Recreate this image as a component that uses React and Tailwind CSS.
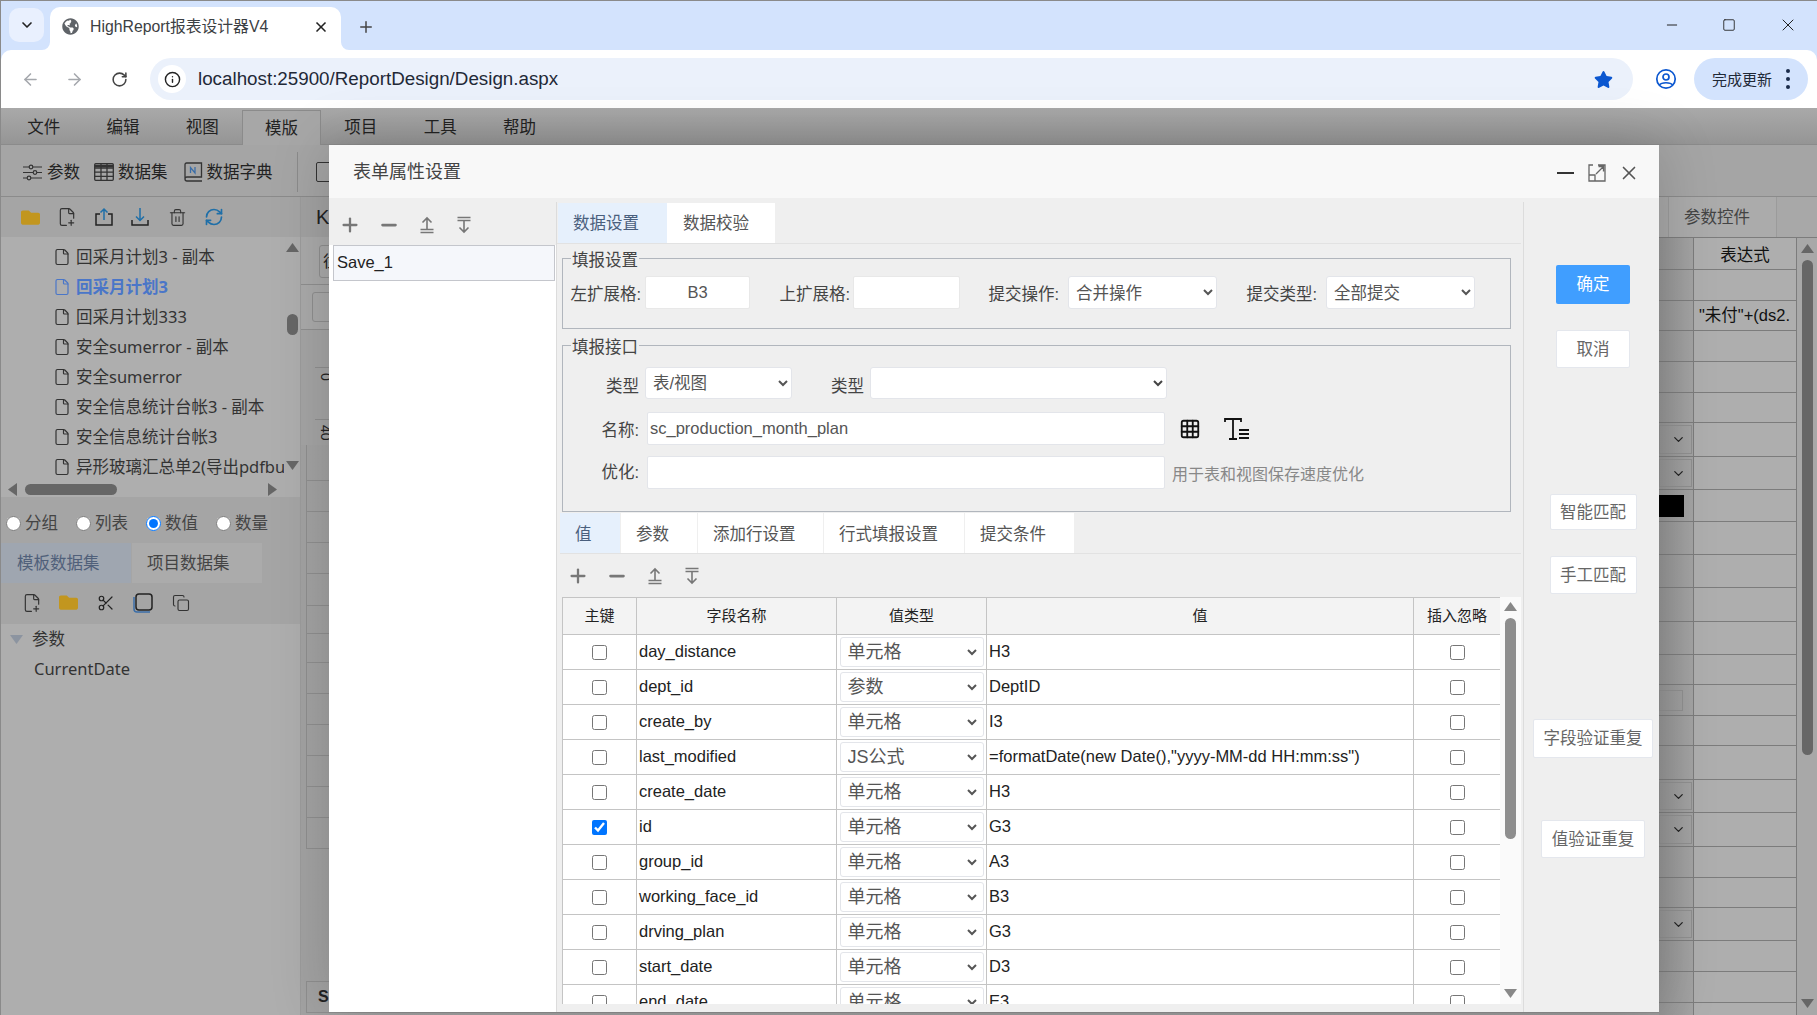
import { ArrowLeft, ArrowRight, RotateCw, Plus, X, ChevronDown, Info, Minus, Square, File, FilePlus2, Trash2, Scissors, Copy, RefreshCw, Grid3x3 } from 'lucide-react';
import { FaGlobeAmericas, FaStar, FaFolder } from 'react-icons/fa';

const cjk = { fontFamily: '"Liberation Sans", "Noto Sans CJK SC", sans-serif' };

const treeItems = ['回采月计划3 - 副本', '回采月计划3', '回采月计划333', '安全sumerror - 副本', '安全sumerror', '安全信息统计台帐3 - 副本', '安全信息统计台帐3', '异形玻璃汇总单2(导出pdfbu'];

const fields = [
    ['day_distance', '单元格', 'H3'],
    ['dept_id', '参数', 'DeptID'],
    ['create_by', '单元格', 'I3'],
    ['last_modified', 'JS公式', '=formatDate(new Date(),"yyyy-MM-dd HH:mm:ss")'],
    ['create_date', '单元格', 'H3'],
    ['id', '单元格', 'G3', true],
    ['group_id', '单元格', 'A3'],
    ['working_face_id', '单元格', 'B3'],
    ['drving_plan', '单元格', 'G3'],
    ['start_date', '单元格', 'D3'],
    ['end_date', '单元格', 'E3'],
];

const sheetRows = [32, 31, 30, 31, 31, 30, 34, 33, 32, 33, 33, 34, 33, 30, 31, 30, 34, 33, 34, 31, 30, 33, 31, 31, 33];

const PlusIcon = () => <Plus size={22} strokeWidth={2.5} className="text-[#777]" />;
const MinusIcon = () => <Minus size={22} strokeWidth={3} className="text-[#777]" />;

const MoveTop = () => (
    <svg width="20" height="20" viewBox="0 0 20 20" fill="none" stroke="#777" strokeWidth="1.6">
        <path d="M10 3v11M5.500 7.500 10 3l4.500 4.500M3.500 14.500h13M3.500 17.500h13" />
    </svg>
);

const MoveBottom = () => (
    <svg width="20" height="20" viewBox="0 0 20 20" fill="none" stroke="#777" strokeWidth="1.6">
        <path d="M3.500 2.500h13M3.500 5.500h13M10 6v11M5.500 12.500 10 17l4.500-4.500" />
    </svg>
);

const ListTools = ({ gap }) => (
    <div className={`flex items-center ${gap}`}>
        <PlusIcon />
        <MinusIcon />
        <MoveTop />
        <MoveBottom />
    </div>
);

const Triangle = ({ dir, className = '' }) => {
    const d = { up: 'M0 9 6.500 0 13 9z', down: 'M0 0h13L6.500 9z', left: 'M9 0v13L0 6.500z', right: 'M0 0v13l9-6.500z' }[dir];
    const vertical = dir === 'up' || dir === 'down';
    return (
        <svg width={vertical ? 13 : 9} height={vertical ? 9 : 13} viewBox={vertical ? '0 0 13 9' : '0 0 9 13'} className={`shrink-0 ${className}`}>
            <path d={d} fill="currentColor" />
        </svg>
    );
};

const Select = ({ value, className }) => (
    <select defaultValue={value} className={`bg-white border border-[#e3e5ea] rounded-[3px] text-[#555] ${className}`}>
        <option value={value}>{value}</option>
    </select>
);

const BrowserChrome = () => (
    <div className="shrink-0 border-t border-l border-[#8a8a8a] bg-[#d3e3fd]">
        <div className="h-[49px] flex items-end pl-[8px]">
            <div className="w-[35px] h-[34px] mb-[8px] rounded-[10px] bg-[#e9f0fe] flex items-center justify-center">
                <ChevronDown size={16} strokeWidth={2.5} className="text-[#222]" />
            </div>
            <svg width="8" height="8" viewBox="0 0 8 8" className="-ml-[2px]"><path d="M8 0v8H0a8 8 0 0 0 8-8z" fill="#fff" /></svg>
            <div className="w-[291px] h-[43px] bg-white rounded-t-[10px] flex items-center pl-[12px] pr-[12px] pb-[4px]">
                <FaGlobeAmericas size={17} className="text-[#5f6368]" />
                <span className="ml-[11px] text-[15.800px] text-[#3c4043] flex-1 whitespace-nowrap">HighReport报表设计器V4</span>
                <X size={16} strokeWidth={2.5} className="text-[#222]" />
            </div>
            <svg width="8" height="8" viewBox="0 0 8 8"><path d="M0 0v8h8a8 8 0 0 1-8-8z" fill="#fff" /></svg>
            <div className="ml-[8px] h-[43px] flex items-center pb-[4px]">
                <Plus size={18} strokeWidth={2} className="text-[#444]" />
            </div>
            <div className="flex-1" />
            <div className="h-[49px] flex items-center pb-[1px] pr-[19px] gap-[42px]">
                <Minus size={16} strokeWidth={1.5} className="text-[#222]" />
                <Square size={14} strokeWidth={1.5} className="text-[#222]" />
                <X size={20} strokeWidth={1.2} className="text-[#222]" />
            </div>
        </div>
        <div className="h-[58px] bg-white rounded-t-[10px] flex items-center pl-[20px] pr-[8px]">
            <ArrowLeft size={19} className="text-[#a5a8ad]" />
            <ArrowRight size={19} className="ml-[25px] text-[#a5a8ad]" />
            <RotateCw size={17} strokeWidth={2.2} className="ml-[27px] text-[#444]" />
            <div className="ml-[22px] w-[1483px] h-[42px] rounded-full bg-[#ebf1fb] flex items-center pl-[8px] pr-[20px]">
                <div className="w-[28px] h-[28px] rounded-full bg-white flex items-center justify-center">
                    <Info size={17} strokeWidth={2} className="text-[#222]" />
                </div>
                <span className="ml-[12px] text-[18.800px] text-[#1f2937] flex-1">localhost:25900/ReportDesign/Design.aspx</span>
                <FaStar size={19} className="text-[#0b57d0]" />
            </div>
            <svg width="22" height="22" viewBox="0 0 22 22" fill="none" stroke="#0b57d0" strokeWidth="1.7" className="ml-[22px]">
                <circle cx="11" cy="11" r="9.200" />
                <circle cx="11" cy="9" r="3" />
                <path d="M4.500 17c2-3 11-3 13 0" />
            </svg>
            <div className="ml-[17px] w-[114px] h-[42px] rounded-full bg-[#d3e3fd] flex items-center pl-[18px]">
                <span className="text-[15px] text-[#1f2937] mt-[2px]">完成更新</span>
                <div className="ml-[14px] flex flex-col gap-[4px]">
                    <span className="w-[4px] h-[4px] rounded-full bg-[#1a2b4a]" />
                    <span className="w-[4px] h-[4px] rounded-full bg-[#1a2b4a]" />
                    <span className="w-[4px] h-[4px] rounded-full bg-[#1a2b4a]" />
                </div>
            </div>
        </div>
    </div>
);

const MenuBar = () => (
    <div className="h-[37px] shrink-0 flex items-end pl-[3px] pr-[1px] bg-gradient-to-b from-[#a9a9a9] to-[#959595] border-b border-[#8b8b8b]">
        {['文件', '编辑', '视图', '模版', '项目', '工具', '帮助'].map((m) => (
            <div key={m} className={`w-[79.300px] h-[35px] flex items-center justify-center text-[16.500px] text-[#222] -mb-px ${m === '模版' ? 'bg-[#a7a7a7] border border-b-0 border-[#8b8b8b]' : ''}`}>
                {m}
            </div>
        ))}
    </div>
);

const ToolBar = () => (
    <div className="h-[52px] shrink-0 bg-[#a5a5a5] border-b border-[#8b8b8b] flex items-center pl-[22px] pt-[3px] text-[16.500px] text-[#222]">
        <svg width="19" height="17" viewBox="0 0 19 17" fill="none" stroke="#333" strokeWidth="1.200">
            <path d="M0 3h6M10 3h9M0 8.500h10M14 8.500h5M0 14h4M8 14h11" />
            <circle cx="8" cy="3" r="1.800" /><circle cx="12" cy="8.500" r="1.800" /><circle cx="6" cy="14" r="1.800" />
        </svg>
        <span className="ml-[5px]">参数</span>
        <svg width="20" height="18" viewBox="0 0 20 18" fill="none" stroke="#333" strokeWidth="1.300" className="ml-[14px]">
            <rect x="0.700" y="0.700" width="18.600" height="16.600" rx="1" />
            <path d="M0.700 5h18.600M0.700 9.200h18.600M0.700 13.300h18.600M7 1v16M13 1v16" />
            <path d="M0.700 3h18.600" strokeWidth="2.500" />
        </svg>
        <span className="ml-[4px]">数据集</span>
        <svg width="19" height="21" viewBox="0 0 19 21" fill="none" stroke="#333" strokeWidth="1.300" className="ml-[16px]">
            <path d="M1 17V2.500A1.500 1.500 0 0 1 2.500 1h15v14H3a2 2 0 0 0-2 2 2 2 0 0 0 2 2h15" />
            <path d="M6.500 11V5.500L11 11V5" stroke="#3b6ea8" />
        </svg>
        <span className="ml-[4px]">数据字典</span>
        <div className="ml-[24px] w-px h-[40px] bg-[#8b8b8b]" />
        <div className="ml-[18px] w-[16px] h-[20px] border border-[#333] rounded-[2px]" />
    </div>
);

const LeftPanel = () => (
    <div className="w-[300px] shrink-0 bg-[#a5a5a5] flex flex-col border-r border-[#9c9c9c]">
        <div className="h-[40px] flex items-center pl-[20px]">
            <FaFolder size={19} className="text-[#c2961f]" />
            <FilePlus2 size={20} strokeWidth={1.4} className="ml-[17px] text-[#333]" />
            <svg width="20" height="20" viewBox="0 0 20 20" fill="none" strokeWidth="1.500" className="ml-[17px]">
                <path d="M6 7H2v11h16V7h-4" stroke="#222" /><path d="M10 13V2M6.500 5.500 10 2l3.500 3.500" stroke="#1f6fa8" />
            </svg>
            <svg width="20" height="20" viewBox="0 0 20 20" fill="none" strokeWidth="1.500" className="ml-[16px]">
                <path d="M2 13v5h16v-5" stroke="#222" /><path d="M10 1v12M6 9.500l4 4 4-4" stroke="#1f6fa8" />
            </svg>
            <Trash2 size={19} strokeWidth={1.4} className="ml-[18px] text-[#333]" />
            <RefreshCw size={20} strokeWidth={2} className="ml-[17px] text-[#1f6fa8]" />
        </div>
        <div className="h-[260px] bg-[#aeaeae] flex flex-col overflow-hidden">
            <div className="flex h-[245px] overflow-hidden">
                <div className="w-[283px] pt-[5px] overflow-hidden" style={{ fontFamily: '"Noto Sans", "Noto Sans CJK SC", sans-serif' }}>
                    {treeItems.map((t, i) => (
                        <div key={t} className={`h-[30px] flex items-center pl-[53px] text-[16.500px] whitespace-nowrap ${i === 1 ? 'text-[#4a76c8] font-bold' : 'text-[#333]'}`}>
                            <File size={18} strokeWidth={1.6} className="shrink-0 -ml-[1px]" />
                            <span className="ml-[5px]">{t}</span>
                        </div>
                    ))}
                </div>
                <div className="flex-1 flex flex-col items-center pt-[6px] text-[#666]">
                    <Triangle dir="up" />
                    <div className="mt-[62px] w-[11px] h-[21px] rounded-full bg-[#666]" />
                    <Triangle dir="down" className="mt-[126px]" />
                </div>
            </div>
            <div className="h-[15px] flex items-center pl-[7px] text-[#666]">
                <Triangle dir="left" />
                <div className="ml-[8px] w-[92px] h-[11px] rounded-full bg-[#666]" />
                <Triangle dir="right" className="ml-[151px]" />
            </div>
        </div>
        <div className="h-[46px] flex items-center pl-[5px] pt-[6px] text-[16.500px] text-[#444]">
            {['分组', '列表', '数值', '数量'].map((r, i) => (
                <label key={r} className="w-[70px] flex items-center gap-[4px]">
                    <input type="radio" name="kind" defaultChecked={i === 2} className="w-[15px] h-[15px] m-0" />
                    {r}
                </label>
            ))}
        </div>
        <div className="h-[40px] flex text-[16.500px]">
            <div className="w-[130px] bg-[#9fa6b0] text-[#50607a] flex items-center pl-[16px]">模板数据集</div>
            <div className="ml-px w-[130px] bg-[#ababab] text-[#444] flex items-center pl-[15px]">项目数据集</div>
        </div>
        <div className="h-[41px] flex items-center pl-[21px] pb-[2px]">
            <FilePlus2 size={20} strokeWidth={1.4} className="text-[#333]" />
            <FaFolder size={19} className="ml-[17px] text-[#c2961f]" />
            <Scissors size={18} strokeWidth={1.6} className="ml-[19px] text-[#222]" />
            <svg width="20" height="20" viewBox="0 0 20 20" fill="none" strokeWidth="1.500" className="ml-[18px]">
                <rect x="3" y="1" width="16" height="16" rx="3" stroke="#222" /><path d="M1 4v12a3 3 0 0 0 3 3h13" stroke="#3b6ea8" />
            </svg>
            <Copy size={18} strokeWidth={1.5} className="ml-[19px] text-[#333]" />
        </div>
        <div className="flex-1 bg-[#aeaeae] text-[16.500px] text-[#333] pt-[3px]" style={{ fontFamily: '"Noto Sans", "Noto Sans CJK SC", sans-serif' }}>
            <div className="h-[24px] flex items-center pl-[9px]">
                <Triangle dir="down" className="text-[#8c94a0]" />
                <span className="ml-[9px]">参数</span>
            </div>
            <div className="mt-[5px] h-[26px] flex items-center pl-[33px]">CurrentDate</div>
        </div>
    </div>
);

const SheetArea = () => (
    <div className="flex-1 flex min-w-0 bg-gradient-to-r from-[#a3a3a3] to-[#9a9a9a]">
        <div className="flex-1 flex flex-col min-w-0 text-[#222]">
            <div className="h-[40px] bg-[#a2a2a2] flex items-center pl-[15px] text-[20px]">K</div>
            <div className="h-[48px] bg-[#aaa] border-b border-[#8f8f8f] pt-[8px] pl-[18px]">
                <div className="w-[60px] h-[33px] border border-[#8f8f8f] rounded-[3px] text-[16px] pl-[3px] leading-[31px]">往</div>
            </div>
            <div className="h-[45px] bg-[#aaa] border-b border-[#8f8f8f] pt-[7px] pl-[11px]">
                <div className="w-[60px] h-[30px] border border-[#8f8f8f] rounded-[3px]" />
            </div>
            <div className="h-[115px] bg-[#a5a5a5] pl-[14px]">
                <div className="h-[37px]" />
                <div className="h-[52px] border-t border-[#8f8f8f] text-[14px] [writing-mode:vertical-rl] pt-[5px]">0</div>
                <div className="border-t border-[#8f8f8f] text-[14px] [writing-mode:vertical-rl] pt-[5px]">40</div>
            </div>
            <div className="flex-1 flex flex-col pl-[5px] overflow-hidden">
                {[36, 31, 31, 31, 32, 28, 29, 31, 31, 31, 31, 31, 31].map((h, i) => (
                    <div key={i} style={{ height: h }} className="shrink-0 border-l border-b border-[#8f8f8f]" />
                ))}
                <div className="mt-auto h-[32px] border border-[#8f8f8f] pl-[11px] text-[16px] font-bold leading-[30px] mb-[2px]">SI</div>
            </div>
        </div>
        <div className="w-[158px] shrink-0 flex flex-col bg-[#a8a8a8]">
            <div className="h-[41px] flex pl-[9px] border-b border-[#7c7c7c]">
                <div className="w-[109px] border-x border-[#9b9b9b] bg-[#ababab] flex items-center pl-[15px] pt-[1px] text-[16.500px] text-[#444]">参数控件</div>
            </div>
            <div className="flex-1 flex overflow-hidden">
                <div className="w-[138px] shrink-0 flex flex-col border-r border-[#7c7c7c]">
                    {sheetRows.map((h, i) => (
                        <div key={i} style={{ height: h }} className="shrink-0 flex border-b border-[#7c7c7c]">
                            <div className="w-[35px] shrink-0 border-r border-[#7c7c7c] bg-gradient-to-r from-[#949494] to-[#a3a3a3] flex items-center">
                                {i === 6 || i === 7 || i === 17 || i === 18 || i === 21 ? (
                                    <div className="w-[33px] h-[calc(100%-4px)] border border-r border-[#8f8f8f] flex items-center justify-end pr-[5px]">
                                        <ChevronDown size={15} className="text-[#222]" />
                                    </div>
                                ) : null}
                                {i === 8 ? <div className="w-[25px] h-[22px] bg-black" /> : null}
                                {i === 14 ? <div className="w-[24px] h-[21px] border border-[#8f8f8f]" /> : null}
                            </div>
                            <div className="flex-1 bg-[#aeaeae] flex items-center overflow-hidden whitespace-nowrap text-[16.500px] text-[#111]">
                                {i === 0 ? <span className="w-full text-center pt-[4px]">表达式</span> : null}
                                {i === 2 ? <span className="pl-[5px]">"未付"+(ds2.</span> : null}
                            </div>
                        </div>
                    ))}
                </div>
                <div className="flex-1 flex flex-col items-center pt-[6px] text-[#666]">
                    <Triangle dir="up" />
                    <div className="mt-[7px] w-[11px] h-[495px] rounded-full bg-[#666]" />
                    <Triangle dir="down" className="mt-[244px]" />
                </div>
            </div>
        </div>
    </div>
);

const Modal = () => (
    <div className="absolute left-[328px] top-[37px] w-[1330px] h-[867px] bg-[#efefef] flex flex-col shadow-[0_0_60px_rgba(0,0,0,0.18)] rounded-t-[2px]">
        <div className="h-[53px] shrink-0 bg-[#f8f8f8] flex items-center pl-[24px] pr-[19px] pt-[2px]">
            <span className="text-[18px] text-[#444] flex-1">表单属性设置</span>
            <div className="w-[17px] h-[2px] bg-[#333]" />
            <svg width="18" height="18" viewBox="0 0 18 18" fill="none" stroke="#666" strokeWidth="1.300" className="ml-[14px]">
                <path d="M5 1H1v16h16V1h-7M1 11h6v6M8 10l7-7M10.500 2.500h5v5" />
            </svg>
            <X size={22} strokeWidth={1.8} className="ml-[12px] text-[#555]" />
        </div>
        <div className="flex-1 flex min-h-0">
            <div className="w-[227px] shrink-0 flex flex-col">
                <div className="h-[47px] flex items-center pl-[10px] pt-[6px]">
                    <ListTools gap="gap-[17px]" />
                </div>
                <div className="flex-1 bg-white pl-[4px] pr-px">
                    <div className="h-[36px] bg-[#f5f7fb] border border-[#c4c6cc] pl-[3px] pb-[2px] flex items-center text-[16.500px] text-[#222]">Save_1</div>
                </div>
            </div>
            <div className="w-[968px] shrink-0 border-r border-[#dcdcdc] border-l mt-[4px] pr-[2px]">
                <div className="h-[41px] flex pl-px border-b border-[#e2e2e2] text-[16.500px] mt-px">
                    <div className="w-[109px] bg-[#e6f0fc] text-[#4a5f7d] flex items-center pl-[15px] pt-[1px]">数据设置</div>
                    <div className="w-[108px] bg-white text-[#555] flex items-center pl-[16px] pt-[1px]">数据校验</div>
                </div>
                <fieldset className="mt-[2px] ml-[5px] w-[949px] h-[83px] border border-[#b1b6bd] text-[16.500px] text-[#444]">
                    <legend className="ml-[8px] px-px pt-[4px] leading-[20px]">填报设置</legend>
                    <div className="flex items-start pt-[6px]">
                        <span className="w-[78px] h-[33px] text-right leading-[37px]">左扩展格:</span>
                        <input defaultValue="B3" className="ml-[4px] w-[105px] h-[33px] bg-white border border-[#e8e8e8] rounded-[2px] text-center text-[#555]" />
                        <span className="w-[100px] text-right leading-[37px]">上扩展格:</span>
                        <input className="ml-[3px] w-[107px] h-[33px] bg-white border border-[#e8e8e8] rounded-[2px]" />
                        <span className="w-[99px] text-right leading-[37px]">提交操作:</span>
                        <Select value="合并操作" className="ml-[9px] w-[149px] h-[33px] pl-[3px] pr-[3px]" />
                        <span className="w-[100px] text-right leading-[37px]">提交类型:</span>
                        <Select value="全部提交" className="ml-[9px] w-[149px] h-[33px] pl-[3px] pr-[3px]" />
                    </div>
                </fieldset>
                <fieldset className="mt-[4px] ml-[5px] w-[949px] h-[179px] border border-[#b1b6bd] text-[16.500px] text-[#444]">
                    <legend className="ml-[8px] px-px pt-[4px] leading-[20px]">填报接口</legend>
                    <div className="flex items-start pt-[10px]">
                        <span className="w-[76px] text-right leading-[39px]">类型</span>
                        <Select value="表/视图" className="ml-[6px] w-[147px] h-[32px] pl-[3px] pr-[3px]" />
                        <span className="w-[72px] text-right leading-[39px]">类型</span>
                        <select className="ml-[6px] w-[297px] h-[32px] bg-white border border-[#e3e5ea] rounded-[3px] pr-[3px]" />
                    </div>
                    <div className="flex items-center mt-[6px]">
                        <span className="w-[76px] text-right pt-[3px]">名称:</span>
                        <input defaultValue="sc_production_month_plan" className="ml-[8px] w-[518px] h-[33px] bg-white border border-[#e3e5ea] rounded-[2px] pl-[2px] text-[#555]" />
                        <Grid3x3 size={22} strokeWidth={2} className="ml-[14px] text-[#111]" />
                        <svg width="26" height="22" viewBox="0 0 26 22" fill="none" stroke="#111" strokeWidth="1.800" className="ml-[23px]">
                            <path d="M1 4V1h16v3M9 1v20M5 21h8M15 12h10M15 16h10M15 20h10" />
                        </svg>
                    </div>
                    <div className="flex items-center mt-[11px]">
                        <span className="w-[76px] text-right">优化:</span>
                        <input className="ml-[8px] w-[518px] h-[33px] bg-white border border-[#e3e5ea] rounded-[2px]" />
                        <span className="ml-[7px] mt-[4px] text-[16px] text-[#888]">用于表和视图保存速度优化</span>
                    </div>
                </fieldset>
                <div className="h-[41px] mt-px ml-[3px] flex border-b border-[#e2e2e2] text-[16.500px] text-[#555]">
                    <div className="w-[60px] bg-[#e6f0fc] text-[#4a5f7d] flex items-center pl-[15px] pt-[3px]">值</div>
                    {[['参数', 'w-[77px]'], ['添加行设置', 'w-[126px]'], ['行式填报设置', 'w-[141px]'], ['提交条件', 'w-[110px]']].map(([t, w]) => (
                        <div key={t} className={`${w} bg-white border-l border-[#efefef] flex items-center pl-[15px] pt-[3px]`}>{t}</div>
                    ))}
                </div>
                <div className="h-[43px] flex items-center pl-[10px] pt-[1px]">
                    <ListTools gap="gap-[17px]" />
                </div>
                <div className="ml-[5px] flex h-[407px] bg-[#fafafa]">
                    <div className="w-[939px] overflow-hidden">
                        <table className="w-[938px] table-fixed border-collapse text-[16.500px] text-[#222] bg-white">
                            <colgroup>
                                <col className="w-[74px]" /><col className="w-[200px]" /><col className="w-[150px]" /><col className="w-[427px]" /><col className="w-[87px]" />
                            </colgroup>
                            <thead>
                                <tr className="h-[37px] bg-[#f3f3f3] text-[15px]">
                                    {['主键', '字段名称', '值类型', '值', '插入忽略'].map((h) => (
                                        <th key={h} className="border border-[#c4c4c4] font-normal">{h}</th>
                                    ))}
                                </tr>
                            </thead>
                            <tbody>
                                {fields.map(([name, type, val, checked]) => (
                                    <tr key={name} className="h-[35px]">
                                        <td className="border border-[#c4c4c4] p-0">
                                            <input type="checkbox" defaultChecked={!!checked} className="block mx-auto w-[15px] h-[15px]" />
                                        </td>
                                        <td className="border border-[#c4c4c4] p-0 pl-[2px] pb-[2px]">{name}</td>
                                        <td className="border border-[#c4c4c4] p-0">
                                            <div className="mx-auto flex w-[144px] h-[30px] bg-white border border-[#e3e5ea] rounded-[3px] pr-[3px]">
                                                <select defaultValue={type} className="w-full pl-[3px] text-[18px] text-[#555]">
                                                    <option value={type}>{type}</option>
                                                </select>
                                            </div>
                                        </td>
                                        <td className="border border-[#c4c4c4] p-0 pl-[2px] pb-[2px] whitespace-nowrap">{val}</td>
                                        <td className="border border-[#c4c4c4] p-0">
                                            <input type="checkbox" className="block mx-auto w-[15px] h-[15px]" />
                                        </td>
                                    </tr>
                                ))}
                            </tbody>
                        </table>
                    </div>
                    <div className="w-[21px] flex flex-col items-center pt-[5px] text-[#888]">
                        <Triangle dir="up" />
                        <div className="mt-[7px] w-[11px] h-[221px] rounded-full bg-[#8e8e8e]" />
                        <Triangle dir="down" className="mt-[150px]" />
                    </div>
                </div>
            </div>
            <div className="flex-1 flex flex-col items-center text-[16.500px] text-[#666] pl-[3px]">
                <button className="mt-[67px] w-[74px] h-[39px] bg-[#409eff] rounded-[2px] text-white">确定</button>
                <button className="mt-[26px] w-[74px] h-[38px] bg-white border border-[#e4e7ed] rounded-[2px]">取消</button>
                <button className="mt-[126px] w-[87px] h-[36px] bg-white border border-[#e4e7ed] rounded-[2px]">智能匹配</button>
                <button className="mt-[26px] w-[87px] h-[38px] bg-white border border-[#e4e7ed] rounded-[2px]">手工匹配</button>
                <button className="mt-[125px] w-[120px] h-[39px] bg-white border border-[#e4e7ed] rounded-[2px]">字段验证重复</button>
                <button className="mt-[62px] w-[104px] h-[38px] bg-white border border-[#e4e7ed] rounded-[2px]">值验证重复</button>
            </div>
        </div>
    </div>
);

const App = () => (
    <div className="w-[1817px] h-[1015px] overflow-hidden flex flex-col bg-[#a8a8a8]" style={cjk}>
        <BrowserChrome />
        <div className="relative flex-1 flex flex-col min-h-0 border-l border-[#8a8a8a]">
            <MenuBar />
            <ToolBar />
            <div className="flex-1 flex min-h-0">
                <LeftPanel />
                <SheetArea />
            </div>
            <Modal />
        </div>
    </div>
);

export default App;
